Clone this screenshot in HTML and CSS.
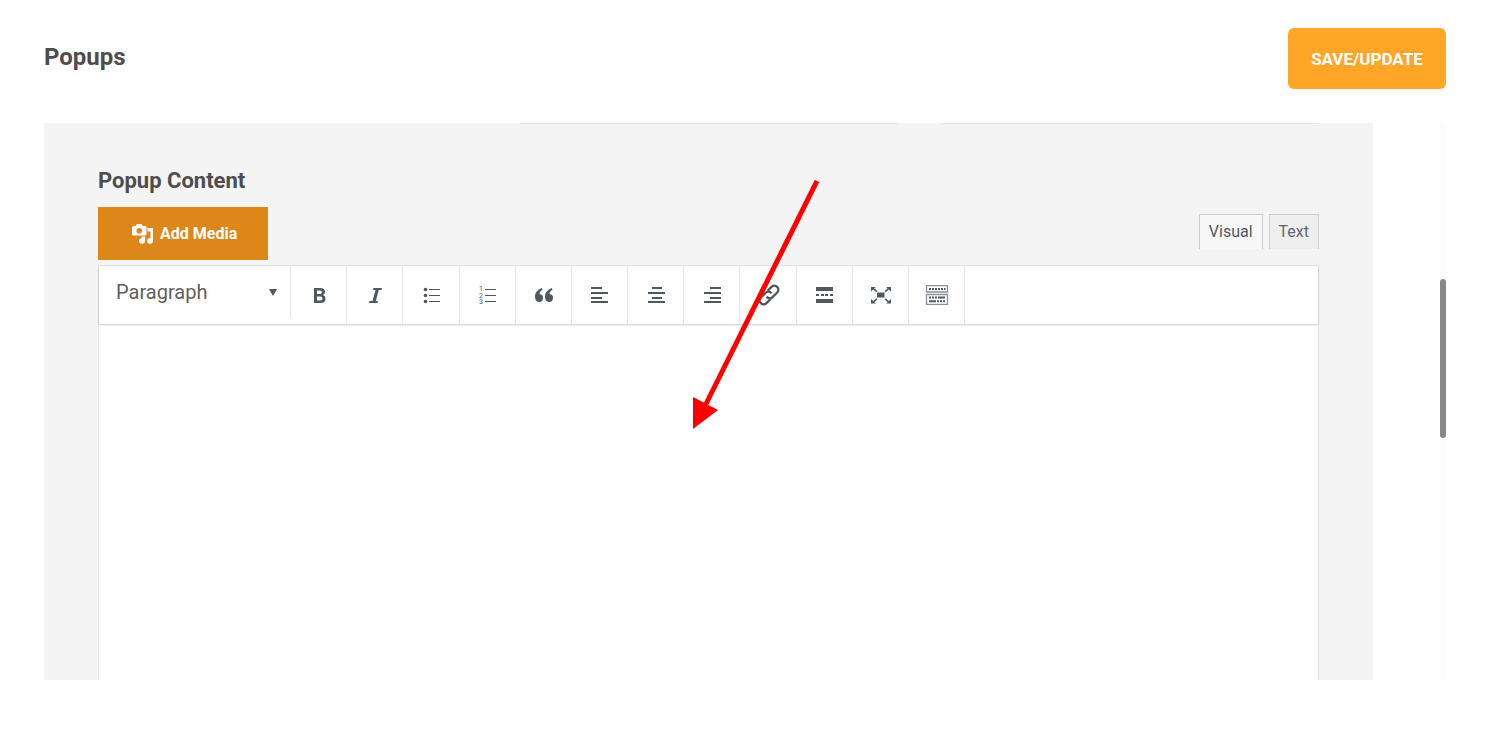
FILE: index.html
```
<!DOCTYPE html>
<html lang="en">
<head>
    <meta charset="UTF-8">
    <meta name="viewport" content="width=device-width, initial-scale=1.0">
    <title>Popups</title>
    <link rel="stylesheet" href="styles.css">
</head>
<body>

<header class="page-header">
    <h1>Popups</h1>
    <button type="submit" form="popupForm" class="save-button">SAVE/UPDATE</button>
</header>

<main class="content">
    <form id="popupForm" class="panel">
        <!-- bottom edge of the fields scrolled out above -->
        <div class="field-row">
            <span></span>
            <span class="field-edge"></span>
            <span class="field-edge"></span>
        </div>

        <label class="panel-title" for="popupContent">Popup Content</label>

        <div class="editor-tools">
            <button type="button" class="media-button">
                <svg width="22" height="22" viewBox="0 0 22 22" fill="#fff">
                    <path fill-rule="evenodd" d="M1.500 3H3.500L5 1H9.500L11 3H13Q14.500 3 14.500 4.500V11Q14.500 12.500 13 12.500H1.500Q0 12.500 0 11V4.500Q0 3 1.500 3ZM7.300 5A2.800 2.800 0 1 0 7.300 10.600A2.800 2.800 0 1 0 7.300 5Z"/>
                    <path d="M15.500 5H21V18A3 2.700 0 1 1 18.500 15.300V8.500H15.500Z"/>
                    <path d="M9.500 13.500H13V18A3 2.800 0 1 1 9.500 15.200Z"/>
                </svg>
                Add Media
            </button>
            <div class="editor-tabs">
                <button type="button" class="tab active">Visual</button>
                <button type="button" class="tab">Text</button>
            </div>
        </div>

        <div class="editor">
            <div class="toolbar">
                <div class="format">
                    <select id="format" aria-label="Format">
                        <option>Paragraph</option>
                        <option>Heading 1</option>
                        <option>Heading 2</option>
                        <option>Preformatted</option>
                    </select>
                    <svg width="8" height="7" viewBox="0 0 8 7"><path d="M0 0H8L4 7Z"/></svg>
                </div>
                <div class="tools">
                    <button type="button" aria-label="Bold">
                        <svg width="24" height="24" viewBox="0 0 24 24"><path fill-rule="evenodd" d="M6 5H12Q17 5 17 8.800Q17 11.200 15 12Q17.500 12.800 17.500 15.700Q17.500 20 12.500 20H6ZM9 7.500V11H12Q14 11 14 9.200Q14 7.500 12 7.500ZM9 13.400V17.500H12.300Q14.500 17.500 14.500 15.500Q14.500 13.400 12.300 13.400Z"/></svg>
                    </button>
                    <button type="button" aria-label="Italic">
                        <svg width="24" height="24" viewBox="0 0 24 24"><path d="M9.500 5H18L17.500 7H14.800L11.800 18H14L13.500 20H5L5.500 18H8.500L11.500 7H9Z"/></svg>
                    </button>
                    <button type="button" aria-label="Bulleted list">
                        <svg width="24" height="24" viewBox="0 0 24 24"><circle cx="5.500" cy="6.500" r="1.800"/><circle cx="5.500" cy="12.500" r="1.800"/><circle cx="5.500" cy="18.500" r="1.800"/><path d="M9 6H20V7H9ZM9 12H20V13H9ZM9 18H20V19H9Z"/></svg>
                    </button>
                    <button type="button" aria-label="Numbered list">
                        <svg width="24" height="24" viewBox="0 0 24 24"><path d="M9 6H20V7H9ZM9 12H20V13H9ZM9 18H20V19H9Z"/><text x="3" y="8">1</text><text x="3" y="15">2</text><text x="3" y="21">3</text></svg>
                    </button>
                    <button type="button" aria-label="Quote">
                        <svg width="24" height="24" viewBox="0 0 24 24"><path id="quote" d="M9.800 5L10.500 6.500Q7.500 8.500 7.500 11.200Q11 11 11 14.800Q11 19 7 19Q3 18.800 3 13.500Q3 7.500 9.800 5Z"/><use href="#quote" x="10"/></svg>
                    </button>
                    <button type="button" aria-label="Align left">
                        <svg width="24" height="24" viewBox="0 0 24 24"><path d="M3 4H14V6H3ZM3 9H20V11H3ZM3 14H14V16H3ZM3 18H20V20H3Z"/></svg>
                    </button>
                    <button type="button" aria-label="Align center">
                        <svg width="24" height="24" viewBox="0 0 24 24"><path d="M7 4H17V6H7ZM3 9H20V11H3ZM7 14H17V16H7ZM3 18H20V20H3Z"/></svg>
                    </button>
                    <button type="button" aria-label="Align right">
                        <svg width="24" height="24" viewBox="0 0 24 24"><path d="M9 4H20V6H9ZM3 9H20V11H3ZM9 14H20V16H9ZM3 18H20V20H3Z"/></svg>
                    </button>
                    <button type="button" aria-label="Insert link">
                        <svg width="24" height="24" viewBox="0 0 24 24"><g transform="rotate(-45 12 12)" fill="none" stroke="#50575e" stroke-width="2.300"><path d="M10 16H4.500A4 4 0 0 1 4.500 8H11A4 4 0 0 1 15 12.500"/><path d="M14 8H19.500A4 4 0 0 1 19.500 16H13A4 4 0 0 1 9 11.500"/></g></svg>
                    </button>
                    <button type="button" aria-label="Insert read more tag">
                        <svg width="24" height="24" viewBox="0 0 24 24"><path d="M3 4H20V8H3ZM3 11H6V13H3ZM8 11H11V13H8ZM12 11H15V13H12ZM17 11H20V13H17ZM3 16H20V20H3Z"/></svg>
                    </button>
                    <button type="button" aria-label="Fullscreen">
                        <svg width="24" height="24" viewBox="0 0 24 24"><path d="M8 9.500H15.500V14.500H8Z"/><path id="corner" d="M2 4H7L5.300 5.300L8.500 8.300L7.300 9.300L4.200 6.400L2 8.500Z"/><use href="#corner" transform="matrix(-1 0 0 1 24 0)"/><use href="#corner" transform="matrix(1 0 0 -1 0 24.500)"/><use href="#corner" transform="matrix(-1 0 0 -1 24 24.500)"/></svg>
                    </button>
                    <button type="button" aria-label="Toolbar toggle">
                        <svg width="24" height="24" viewBox="0 0 24 24"><path fill="none" stroke="#8b9197" stroke-width="1.300" d="M1.500 2.700H22.500V9H1.500ZM1.500 11.500H22.500V21.300H1.500Z"/><path d="M4 5H6V7H4ZM7 5H9V7H7ZM10 5H12V7H10ZM13 5H15V7H13ZM16 5H18V7H16ZM19 5H20.500V7H19ZM4 13.500H6V15.500H4ZM7 13.500H9V15.500H7ZM10 13.500H12V15.500H10ZM13 13.500H20V15.500H13ZM4 17.300H11V19.300H4ZM12 17.300H14V19.300H12ZM15 17.300H17V19.300H15ZM18 17.300H20V19.300H18Z"/></svg>
                    </button>
                </div>
            </div>
            <textarea id="popupContent" name="popupContent"></textarea>
        </div>

        <!-- arrow pointing into the editor -->
        <svg class="pointer" width="128" height="250" viewBox="0 0 128 250">
            <path d="M125 1L12 228" stroke="#f00" stroke-width="5"/>
            <path d="M1 217L26 230L1 249Z" fill="#f00"/>
        </svg>
    </form>

    <div class="scroll-track">
        <div class="scroll-thumb"></div>
    </div>
</main>

</body>
</html>
```
FILE: styles.css
```
* {
    box-sizing: border-box;
}
body {
    display: flex;
    flex-direction: column;
    gap: 34px;
    height: 100vh;
    margin: 0;
    padding: 28px 49px 73px 44px;
    background-color: #fff;
    color: #4d4d4d;
    font-family: Roboto, sans-serif;
}
button, select, textarea {
    font-family: inherit;
}
button {
    cursor: pointer;
}
.page-header {
    display: flex;
    justify-content: space-between;
    align-items: center;
}
h1 {
    margin: 0;
    padding-bottom: 4px;
    font-size: 24px;
    line-height: 32px;
}
.save-button {
    width: 158px;
    height: 61px;
    padding: 0;
    border: none;
    border-radius: 6px;
    background-color: #ffa629;
    color: #fff;
    font-size: 17px;
    font-weight: bold;
}
.content {
    display: flex;
    flex: 1;
    gap: 67px;
    min-height: 0;
}
.panel {
    position: relative;
    display: flex;
    flex: 1;
    flex-direction: column;
    padding: 0 54px;
    background-color: #f4f4f4;
}
.field-row {
    display: grid;
    grid-template-columns: repeat(3, 1fr);
    gap: 42px;
    height: 1px;
}
.field-edge {
    background-color: #e8e8e8;
}
.panel-title {
    margin-top: 43px;
    margin-bottom: 12px;
    font-size: 22px;
    font-weight: bold;
    line-height: 28px;
}
.editor-tools {
    display: flex;
    justify-content: space-between;
    align-items: flex-start;
    margin-bottom: 5px;
}
.media-button {
    display: flex;
    align-items: center;
    gap: 6px;
    width: 170px;
    height: 53px;
    padding: 0 0 0 34px;
    border: none;
    background-color: #dd861a;
    color: #fff;
    font-size: 16px;
    font-weight: bold;
}
.editor-tabs {
    display: flex;
    gap: 6px;
    margin-top: 7px;
}
.tab {
    height: 35px;
    padding: 0 9px 2px;
    border: 1px solid #cbcdd3;
    border-bottom: none;
    background-color: #eee;
    color: #646970;
    font-size: 16px;
}
.tab.active {
    background-color: #f6f8f8;
    color: #50575e;
}
.editor {
    display: flex;
    flex: 1;
    flex-direction: column;
    border: 1px solid #e3e4e5;
    border-bottom: none;
    background-color: #fff;
}
.toolbar {
    display: flex;
    height: 58px;
    box-shadow: 0 1px 2px rgba(0, 0, 0, 0.22);
}
.format {
    display: grid;
    align-items: center;
    width: 192px;
    height: 52px;
    border-right: 1px solid #e8e8e8;
}
.format select, .format svg {
    grid-area: 1 / 1;
}
.format select {
    width: 100%;
    height: 100%;
    padding: 0 17px;
    border: none;
    background: none;
    color: #5f5f5f;
    font-size: 20px;
    appearance: none;
}
.format svg {
    justify-self: end;
    margin-right: 13px;
    fill: #50575e;
    pointer-events: none;
}
.tools {
    display: grid;
    grid-template-columns: repeat(12, 1fr);
    width: 674px;
}
.tools button {
    display: flex;
    justify-content: center;
    align-items: center;
    padding: 0 0 0 2px;
    border: none;
    border-right: 1px solid #e8e8e8;
    background: none;
}
.tools svg {
    fill: #50575e;
}
.tools text {
    font-size: 7px;
}
textarea {
    flex: 1;
    width: 100%;
    padding: 20px;
    border: none;
    outline: none;
    background: none;
    font-size: 16px;
    resize: none;
}
.pointer {
    position: absolute;
    top: 57px;
    left: 648px;
    pointer-events: none;
}
.scroll-track {
    width: 6px;
    padding-top: 156px;
    background-color: #fafcfe;
}
.scroll-thumb {
    height: 159px;
    border-radius: 3px;
    background-color: #888;
}
```
